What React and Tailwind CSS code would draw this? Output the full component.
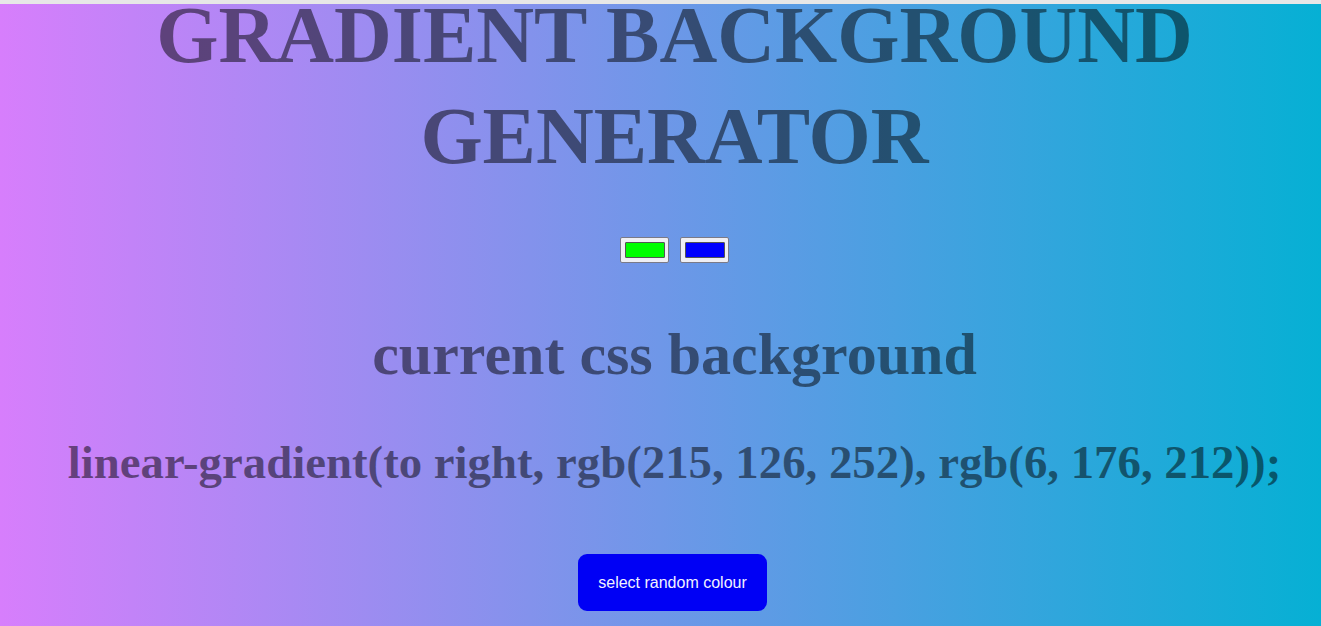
import React from 'react';

const Swatch = ({ color }) => (
  <div className="w-[49px] h-[26px] bg-[#efeff4] border border-[#7a7a88] rounded-[2px] flex items-center justify-center">
    <div className="w-[40px] h-[16px] border border-[#555] rounded-[1px]" style={{ background: color }} />
  </div>
);

export default function App() {
  return (
    <div
      className="relative min-h-[626px] overflow-hidden pl-[28px] text-black/50 text-center bg-[linear-gradient(to_right,rgb(215,126,252),rgb(6,176,212))]"
      style={{ fontFamily: '"Liberation Serif", "Times New Roman", serif' }}
    >
      {/* browser strip over top */}
      <div className="absolute inset-x-0 top-0 h-[4px] bg-[#e7e7e7] z-10" aria-hidden="true" />

      <h1 className="pt-[6px] text-[80px] font-bold">
        <span className="block leading-[58px]">GRADIENT BACKGROUND</span>
        <span className="block leading-[102px] mt-[21px]">GENERATOR</span>
      </h1>

      <div className="mt-[50px] flex justify-center gap-[11px]">
        <Swatch color="#00ff00" />
        <Swatch color="#0000ff" />
      </div>

      <h2 className="mt-[56px] text-[60px] leading-[70px] font-bold">current css background</h2>

      <h3 className="mt-[45px] text-[46.8px] leading-[56px] font-bold whitespace-nowrap">
        linear-gradient(to right, rgb(215, 126, 252), rgb(6, 176, 212));
      </h3>

      <div className="mt-[64px] flex justify-center pr-[4px]">
        <button
          className="w-[189px] h-[57px] rounded-[9px] bg-[#0000f5] text-[#f2f2ff] text-[16px]"
          style={{ fontFamily: '"Liberation Sans", Arial, sans-serif' }}
        >
          select random colour
        </button>
      </div>
    </div>
  );
}
